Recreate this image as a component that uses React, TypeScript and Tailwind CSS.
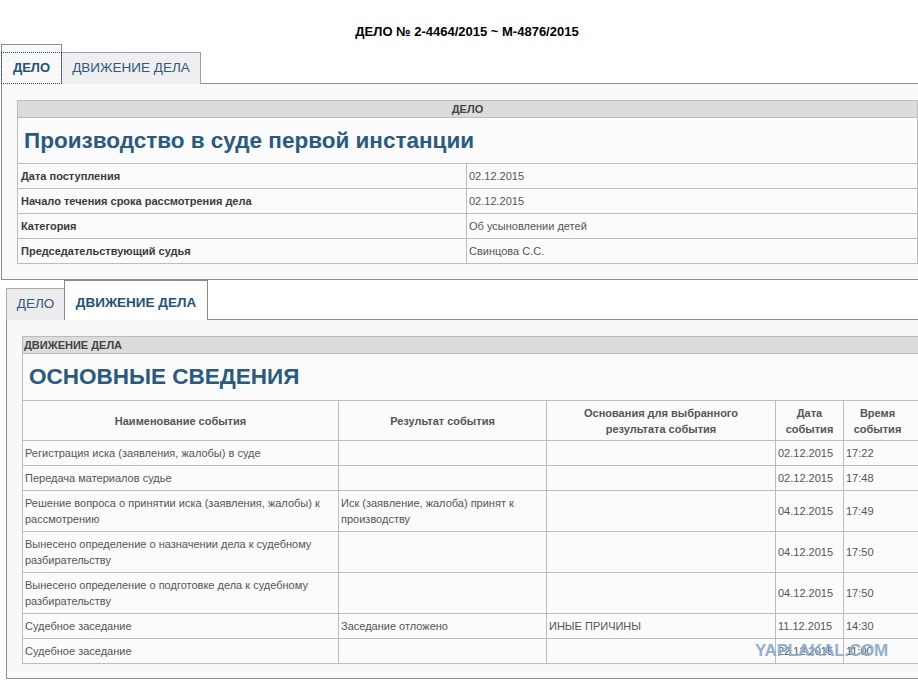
const caseRows = [
  { label: 'Дата поступления', value: '02.12.2015' },
  { label: 'Начало течения срока рассмотрения дела', value: '02.12.2015' },
  { label: 'Категория', value: 'Об усыновлении детей' },
  { label: 'Председательствующий судья', value: 'Свинцова С.С.' },
];

type EventRow = {
  name: string;
  result: string;
  reason: string;
  date: string;
  time: string;
};

const events: EventRow[] = [
  { name: 'Регистрация иска (заявления, жалобы) в суде', result: '', reason: '', date: '02.12.2015', time: '17:22' },
  { name: 'Передача материалов судье', result: '', reason: '', date: '02.12.2015', time: '17:48' },
  {
    name: 'Решение вопроса о принятии иска (заявления, жалобы) к рассмотрению',
    result: 'Иск (заявление, жалоба) принят к производству',
    reason: '',
    date: '04.12.2015',
    time: '17:49',
  },
  {
    name: 'Вынесено определение о назначении дела к судебному разбирательству',
    result: '',
    reason: '',
    date: '04.12.2015',
    time: '17:50',
  },
  {
    name: 'Вынесено определение о подготовке дела к судебному разбирательству',
    result: '',
    reason: '',
    date: '04.12.2015',
    time: '17:50',
  },
  { name: 'Судебное заседание', result: 'Заседание отложено', reason: 'ИНЫЕ ПРИЧИНЫ', date: '11.12.2015', time: '14:30' },
  { name: 'Судебное заседание', result: '', reason: '', date: '22.12.2015', time: '11:00' },
];

const gridCols = 'grid grid-cols-[316px_208px_229px_68px_1fr]';

function CaseTab() {
  return (
    <section className="ml-px w-[940px]">
      <div className="flex h-[40px] items-end">
        <div className="relative z-10 flex h-[40px] w-[61px] items-center justify-center border border-b-0 border-[#8c8c8c] bg-[#f9f9f9] pt-[7px] text-[13px] font-bold text-[#22537c]">
          <span className="absolute -left-px -right-px top-[7px] bottom-0 border border-dotted border-[#1d4b6b]" />
          ДЕЛО
        </div>
        <div className="flex h-[32px] w-[139px] items-center justify-center border border-b-0 border-l-0 border-[#9a9cba] bg-[#efefef] text-[13.5px] text-[#2d5a82]">
          ДВИЖЕНИЕ ДЕЛА
        </div>
      </div>
      <div className="-mt-px border border-[#8c8c8c] bg-[#f9f9f9] pb-[15px] pl-[15px] pt-[16px]">
        <div className="w-[901px] border border-[#bcbcbc] bg-[#fbfbfb] text-[11px] leading-[16px]">
          <div className="h-[17px] border-b border-[#bcbcbc] bg-[#dcdcdc] text-center font-bold text-[#444]">ДЕЛО</div>
          <div className="flex h-[46px] items-center border-b border-[#bcbcbc] pl-[6px] text-[22.5px] font-bold text-[#285a84]">
            Производство в суде первой инстанции
          </div>
          {caseRows.map((row, i) => (
            <div
              key={row.label}
              className={`grid grid-cols-[449px_1fr] ${i < caseRows.length - 1 ? 'h-[25px] border-b border-[#bcbcbc]' : 'h-[24px]'}`}
            >
              <div className="flex items-center border-r border-[#bcbcbc] pl-[3px] font-bold text-[#3a3a3a]">{row.label}</div>
              <div className="flex items-center pl-[2px] text-[#555]">{row.value}</div>
            </div>
          ))}
        </div>
      </div>
    </section>
  );
}

function MovementTab() {
  return (
    <section className="ml-[6px] w-[940px]">
      <div className="flex h-[40px] items-end">
        <div className="flex h-[32px] w-[58px] items-center justify-center border border-b-0 border-r-0 border-[#aaa] bg-[#ececec] text-[13.5px] text-[#2d5a82]">
          ДЕЛО
        </div>
        <div className="relative z-10 flex h-[40px] w-[144px] items-center justify-center border border-b-0 border-[#8c8c8c] bg-white pt-[5px] text-[13.5px] font-bold text-[#22537c]">
          ДВИЖЕНИЕ ДЕЛА
        </div>
      </div>
      <div className="-mt-px border border-[#8c8c8c] bg-[#f8f8f8] pb-[14px] pl-[15px] pt-[16px]">
        <div className="w-[900px] border border-[#bcbcbc] bg-[#fbfbfb] text-[11px] leading-[16px]">
          <div className="h-[17px] border-b border-[#bcbcbc] bg-[#dcdcdc] pl-[1px] font-bold text-[#444]">ДВИЖЕНИЕ ДЕЛА</div>
          <div className="flex h-[47px] items-center border-b border-[#bcbcbc] pl-[6px] text-[22.5px] font-bold text-[#285a84]">
            ОСНОВНЫЕ СВЕДЕНИЯ
          </div>
          <div className={`${gridCols} h-[40px] border-b border-[#bcbcbc] text-center font-bold text-[#555]`}>
            <div className="flex items-center justify-center border-r border-[#bcbcbc]">Наименование события</div>
            <div className="flex items-center justify-center border-r border-[#bcbcbc]">Результат события</div>
            <div className="flex items-center justify-center border-r border-[#bcbcbc] px-[20px]">
              Основания для выбранного результата события
            </div>
            <div className="flex items-center justify-center border-r border-[#bcbcbc] px-[4px]">Дата события</div>
            <div className="flex items-center justify-center pr-[10px]">
              Время
              <br />
              события
            </div>
          </div>
          {events.map((ev, i) => (
            <div
              key={i}
              className={`${gridCols} text-[#555] ${i < events.length - 1 ? 'border-b border-[#bcbcbc]' : ''}`}
            >
              <div className="flex items-center border-r border-[#bcbcbc] px-[2px] py-[4px]">{ev.name}</div>
              <div className="flex items-center border-r border-[#bcbcbc] px-[2px] py-[4px]">{ev.result}</div>
              <div className="flex items-center border-r border-[#bcbcbc] px-[2px] py-[4px]">{ev.reason}</div>
              <div className="flex items-center border-r border-[#bcbcbc] px-[2px] py-[4px]">{ev.date}</div>
              <div className="flex items-center px-[2px] py-[4px]">{ev.time}</div>
            </div>
          ))}
        </div>
      </div>
    </section>
  );
}

export default function App() {
  return (
    <div className="relative h-[680px] w-[918px] overflow-hidden bg-white font-['Liberation_Sans',Arial,sans-serif]">
      <div className="flex h-[44px] justify-center pl-[16px] pt-[24px]">
        <h1 className="text-[13px] font-bold leading-[15px] text-black">ДЕЛО № 2-4464/2015 ~ М-4876/2015</h1>
      </div>
      <CaseTab />
      <MovementTab />
      <div className="absolute left-[755px] top-[641px] text-[17px] font-bold leading-[20px] tracking-[-0.2px] text-[#8eb0d0]">
        YAPLAKAL.COM
      </div>
    </div>
  );
}
